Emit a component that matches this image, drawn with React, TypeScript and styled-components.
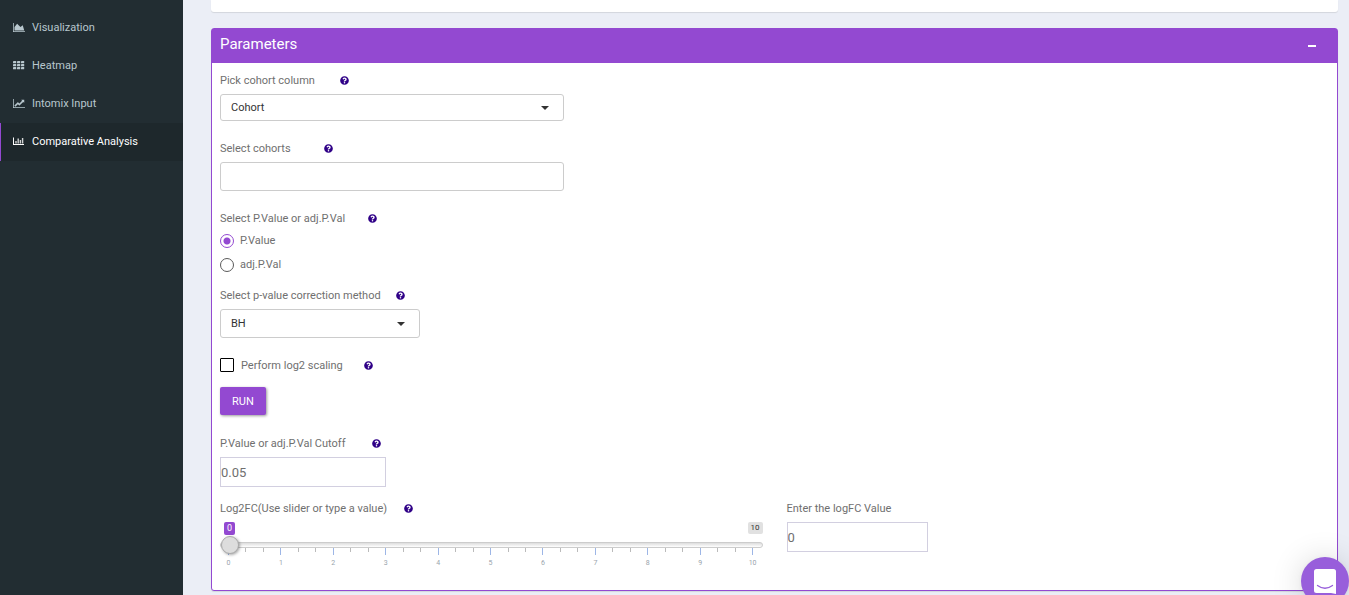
import React, { useState } from "react";
import styled, { createGlobalStyle, css } from "styled-components";
import { FaQuestionCircle } from "react-icons/fa";

const purple = "#9349d1";

const GlobalStyle = createGlobalStyle`
  *, *::before, *::after { box-sizing: border-box; }
  body {
    margin: 0;
    background: #ebeef6;
    color: #6f6f6f;
    font-family: Roboto, "Liberation Sans", sans-serif;
    font-size: 11px;
    line-height: 16px;
  }
  input, select, button { font: inherit; color: inherit; }
`;

const Page = styled.div`
  display: flex;
  min-height: 100vh;
`;

const Sidebar = styled.nav`
  flex: 0 0 183px;
  padding-top: 9px;
  background: #222d32;
`;

const NavLink = styled.a<{ $active?: boolean }>`
  display: flex;
  align-items: center;
  gap: 7px;
  height: 38px;
  padding-left: 12px;
  border-left: 1px solid transparent;
  color: #b8c7ce;
  text-decoration: none;
  svg { flex: none; }
  ${(p) =>
    p.$active &&
    css`
      border-left-color: ${purple};
      background: #1e282c;
      color: #fff;
    `}
`;

const Main = styled.main`
  flex: 1;
  min-width: 0;
  display: flex;
  flex-direction: column;
  gap: 16px;
  padding: 0 11px 4px 28px;
`;

const UpperCard = styled.section`
  height: 12px;
  border-radius: 0 0 3px 3px;
  background: #fff;
  box-shadow: 0 1px 1px rgba(0, 0, 0, 0.1);
`;

const Panel = styled.section`
  border: 1px solid ${purple};
  border-radius: 3px;
  background: #fff;
  box-shadow: 0 1px 1px rgba(0, 0, 0, 0.1);
`;

const PanelHeader = styled.header`
  display: flex;
  align-items: center;
  justify-content: space-between;
  height: 34px;
  padding: 0 21px 0 8px;
  background: ${purple};
  color: #fff;
`;

const PanelTitle = styled.h2`
  margin: 0 0 4px;
  font-size: 15px;
  font-weight: 400;
  line-height: 20px;
`;

const CollapseButton = styled.button`
  display: flex;
  padding: 4px 0;
  border: 0;
  background: none;
  cursor: pointer;
`;

const PanelBody = styled.div`
  padding: 9px 8px 22px;
`;

const Group = styled.div<{ $after?: number }>`
  margin-bottom: ${(p) => p.$after ?? 19}px;
`;

const RadioGroup = styled.fieldset`
  margin: 0 0 14px;
  padding: 0;
  border: 0;
`;

const LabelRow = styled.div<{ $below?: number }>`
  display: flex;
  align-items: center;
  height: 16px;
  margin-bottom: ${(p) => p.$below ?? 6}px;
`;

const LabelText = styled.label<{ $span?: number }>`
  min-width: ${(p) => p.$span ?? 0}px;
  padding-top: 2px;
  white-space: nowrap;
`;

const HelpButton = styled.button`
  display: flex;
  padding: 0;
  border: 0;
  background: none;
  color: #2f0087;
  cursor: pointer;
`;

const SelectBox = styled.div<{ $width: number }>`
  display: grid;
  align-items: center;
  width: 100%;
  max-width: ${(p) => p.$width}px;
  > * { grid-area: 1 / 1; }
  > svg {
    justify-self: end;
    margin-right: 15px;
    pointer-events: none;
  }
`;

const Select = styled.select<{ $compact?: boolean }>`
  appearance: none;
  width: 100%;
  height: ${(p) => (p.$compact ? 27 : 29)}px;
  padding: 0 24px 0 10px;
  border: 1px solid #ccc;
  border-radius: 3px;
  background: #fff;
  color: #333;
`;

const CohortInput = styled.input`
  display: block;
  width: 100%;
  max-width: 344px;
  height: 29px;
  padding: 0 10px;
  border: 1px solid #ccc;
  border-radius: 3px;
  background: #fff;
`;

const NumberInput = styled.input<{ $width: number }>`
  display: block;
  appearance: textfield;
  width: 100%;
  max-width: ${(p) => p.$width}px;
  height: 30px;
  padding: 0;
  border: 1px solid #d2cfe0;
  background: #fff;
  font-size: 13px;
  &::-webkit-inner-spin-button { appearance: none; margin: 0; }
`;

const OptionRow = styled.label`
  display: flex;
  align-items: center;
  gap: 6px;
  height: 16px;
  & + & { margin-top: 8px; }
`;

const Radio = styled.input`
  appearance: none;
  width: 14px;
  height: 14px;
  margin: 0;
  border: 1px solid #5a5a5a;
  border-radius: 50%;
  background: #fff;
  &:checked {
    border-color: ${purple};
    background: radial-gradient(circle, ${purple} 3px, #fff 4px);
  }
`;

const CheckRow = styled.div`
  display: flex;
  align-items: center;
  gap: 7px;
  height: 16px;
  margin-bottom: 14px;
`;

const Checkbox = styled.input`
  appearance: none;
  width: 14px;
  height: 14px;
  margin: 0;
  border: 1px solid #000;
  border-radius: 1px;
  background: #fff;
  &:checked { background: ${purple}; }
`;

const RunButton = styled.button`
  display: block;
  height: 28px;
  margin-bottom: 20px;
  padding: 2px 12px 0;
  border: 0;
  border-radius: 2px;
  background: ${purple};
  color: #fff;
  box-shadow: 1px 1px 3px rgba(0, 0, 0, 0.4);
  cursor: pointer;
`;

const Columns = styled.div`
  display: grid;
  grid-template-columns: 1fr 1fr;
  gap: 24px;
`;

const TagRow = styled.div`
  display: flex;
  align-items: flex-start;
  justify-content: space-between;
  height: 14px;
  padding-left: 4px;
`;

const Tag = styled.output<{ $current?: boolean }>`
  padding: 0 3px;
  border-radius: 2px;
  background: ${(p) => (p.$current ? purple : "#e1e1e1")};
  color: ${(p) => (p.$current ? "#fff" : "#333")};
  font-size: ${(p) => (p.$current ? 9 : 8)}px;
  line-height: ${(p) => (p.$current ? 13 : 12)}px;
`;

const Range = styled.input`
  appearance: none;
  display: block;
  width: 100%;
  height: 18px;
  margin: 0;
  background: transparent;
  &::-webkit-slider-runnable-track {
    height: 6px;
    border: 1px solid #ccc;
    border-radius: 3px;
    background: linear-gradient(#ddd, #fff);
  }
  &::-webkit-slider-thumb {
    appearance: none;
    width: 18px;
    height: 18px;
    margin-top: -7px;
    border: 1px solid #ababab;
    border-radius: 50%;
    background: #ddd;
    box-shadow: 1px 1px 3px rgba(0, 0, 0, 0.35);
  }
`;

const SliderArea = styled.div`
  display: grid;
  grid-template-rows: 12px auto;
  ${Range} {
    grid-area: 1 / 1;
    z-index: 1;
  }
`;

const Scale = styled.div`
  grid-area: 2 / 1;
  display: flex;
  justify-content: space-between;
  padding: 0 9px 0 8px;
`;

const Tick = styled.span<{ $major: boolean }>`
  display: flex;
  flex-direction: column;
  align-items: center;
  width: 1px;
  height: 20px;
  color: #99a4ac;
  font-size: 7px;
  line-height: 8px;
  &::before {
    content: "";
    flex: none;
    width: 1px;
    height: ${(p) => (p.$major ? 7 : 4)}px;
    margin-bottom: 4px;
    background: ${(p) => (p.$major ? "#9db6e6" : "#bbb")};
  }
`;

const ChatButton = styled.button`
  position: fixed;
  right: 0;
  bottom: -10px;
  z-index: 2;
  display: flex;
  align-items: center;
  justify-content: center;
  width: 48px;
  height: 48px;
  padding: 0;
  border: 0;
  border-radius: 50%;
  background: #985edb;
  box-shadow: 0 1px 6px rgba(0, 0, 0, 0.06), 0 2px 32px rgba(0, 0, 0, 0.16);
  cursor: pointer;
`;

const AreaIcon = () => (
  <svg width="12" height="10" viewBox="0 128 2048 1707" fill="currentColor" aria-hidden="true">
    <path d="M2048 1536v128h-2048v-1536h128v1408h1920zM1664 512l256 896h-1664v-576l448-576 576 576z" />
  </svg>
);

const GridIcon = () => (
  <svg width="12" height="10" viewBox="0 0 12 10" fill="currentColor" aria-hidden="true">
    {[0, 4, 8].map((x) =>
      [0, 3, 6].map((y) => <rect key={`${x}-${y}`} x={x} y={y} width="3.200" height="2.300" rx=".4" />)
    )}
  </svg>
);

const LineIcon = () => (
  <svg width="12" height="10" viewBox="0 128 2048 1707" fill="currentColor" aria-hidden="true">
    <path d="M2048 1536v128h-2048v-1536h128v1408h1920zM1920 288v435q0 21-19.500 29.500t-35.500-7.500l-121-121-633 633q-10 10-23 10t-23-10l-233-233-416 416-192-192 585-585q10-10 23-10t23 10l233 233 464-464-121-121q-16-16-7.500-35.500t29.500-19.500h435q14 0 23 9t9 23z" />
  </svg>
);

const BarIcon = () => (
  <svg width="12" height="10" viewBox="0 0 12 10" fill="currentColor" aria-hidden="true">
    <path d="M0 .5h1V7h10v1H0z" />
    <path opacity=".8" d="M2.300 4h1.400v2.500H2.300zM4.500 1.500h1.400v5H4.500zM6.700 3h1.400v3.500H6.700zM8.900 1h1.400v5.500H8.900z" />
  </svg>
);

const Caret = () => (
  <svg width="8" height="4" viewBox="0 0 8 4" aria-hidden="true">
    <path d="M0 0h8L4 4z" fill="#333" />
  </svg>
);

const Help = ({ topic }: { topic: string }) => (
  <HelpButton type="button" aria-label={`Help: ${topic}`}>
    <FaQuestionCircle size={9} />
  </HelpButton>
);

const FieldLabel = ({ text, target, span }: { text: string; target: string; span?: number }) => (
  <LabelRow>
    <LabelText htmlFor={target} $span={span}>{text}</LabelText>
    {span && <Help topic={text} />}
  </LabelRow>
);

const steps = Array.from({ length: 31 }, (_, i) => i);

export default function App() {
  const [logFc, setLogFc] = useState(0);
  const [adjusted, setAdjusted] = useState(false);
  const [open, setOpen] = useState(true);

  return (
    <>
      <GlobalStyle />
      <Page>
        <Sidebar>
          <NavLink href="#visualization"><AreaIcon />Visualization</NavLink>
          <NavLink href="#heatmap"><GridIcon />Heatmap</NavLink>
          <NavLink href="#intomix"><LineIcon />Intomix Input</NavLink>
          <NavLink href="#comparative" $active aria-current="page"><BarIcon />Comparative Analysis</NavLink>
        </Sidebar>
        <Main>
          <UpperCard />
          <Panel>
            <PanelHeader>
              <PanelTitle>Parameters</PanelTitle>
              <CollapseButton type="button" aria-label="Collapse" onClick={() => setOpen(!open)}>
                <svg width="8" height="2" viewBox="0 0 8 2" aria-hidden="true">
                  <rect width="8" height="2" fill="#fff" />
                </svg>
              </CollapseButton>
            </PanelHeader>
            {open && (
              <PanelBody>
                <Group>
                  <FieldLabel text="Pick cohort column" target="column" span={120} />
                  <SelectBox $width={344}>
                    <Select id="column" $compact><option>Cohort</option></Select>
                    <Caret />
                  </SelectBox>
                </Group>
                <Group>
                  <FieldLabel text="Select cohorts" target="cohorts" span={104} />
                  <CohortInput id="cohorts" type="text" />
                </Group>
                <RadioGroup aria-labelledby="kind">
                  <LabelRow $below={7}>
                    <LabelText as="span" id="kind" $span={148}>Select P.Value or adj.P.Val</LabelText>
                    <Help topic="P.Value or adj.P.Val" />
                  </LabelRow>
                  <OptionRow>
                    <Radio type="radio" name="kind" checked={!adjusted} onChange={() => setAdjusted(false)} />
                    P.Value
                  </OptionRow>
                  <OptionRow>
                    <Radio type="radio" name="kind" checked={adjusted} onChange={() => setAdjusted(true)} />
                    adj.P.Val
                  </OptionRow>
                </RadioGroup>
                <Group>
                  <FieldLabel text="Select p-value correction method" target="method" span={176} />
                  <SelectBox $width={200}>
                    <Select id="method"><option>BH</option></Select>
                    <Caret />
                  </SelectBox>
                </Group>
                <CheckRow>
                  <Checkbox id="scaling" type="checkbox" />
                  <LabelText htmlFor="scaling" $span={116}>Perform log2 scaling</LabelText>
                  <Help topic="Perform log2 scaling" />
                </CheckRow>
                <RunButton type="button">RUN</RunButton>
                <Group $after={13}>
                  <FieldLabel text="P.Value or adj.P.Val Cutoff" target="cutoff" span={152} />
                  <NumberInput id="cutoff" type="number" step="0.01" defaultValue="0.05" $width={166} />
                </Group>
                <Columns>
                  <div>
                    <FieldLabel text="Log2FC(Use slider or type a value)" target="slider" span={184} />
                    <TagRow>
                      <Tag $current>{logFc}</Tag>
                      <Tag>10</Tag>
                    </TagRow>
                    <SliderArea>
                      <Range
                        id="slider"
                        type="range"
                        min={0}
                        max={10}
                        value={logFc}
                        onChange={(e) => setLogFc(Number(e.target.value))}
                      />
                      <Scale>
                        {steps.map((i) => (
                          <Tick key={i} $major={i % 3 === 0}>{i % 3 === 0 ? i / 3 : null}</Tick>
                        ))}
                      </Scale>
                    </SliderArea>
                  </div>
                  <div>
                    <FieldLabel text="Enter the logFC Value" target="logfc" />
                    <NumberInput
                      id="logfc"
                      type="number"
                      value={logFc}
                      onChange={(e) => setLogFc(Number(e.target.value))}
                      $width={141}
                    />
                  </div>
                </Columns>
              </PanelBody>
            )}
          </Panel>
        </Main>
      </Page>
      <ChatButton type="button" aria-label="Open chat">
        <svg width="22" height="25" viewBox="0 0 22 25" aria-hidden="true">
          <path d="M2.500 0h17A2.500 2.500 0 0 1 22 2.500V25l-5-1H2.500A2.500 2.500 0 0 1 0 21.500v-19A2.500 2.500 0 0 1 2.500 0z" fill="#fff" />
          <path d="M3.500 16.500q7.500 5.500 15 0" fill="none" stroke="#985edb" strokeWidth="1.300" strokeLinecap="round" />
        </svg>
      </ChatButton>
    </>
  );
}
